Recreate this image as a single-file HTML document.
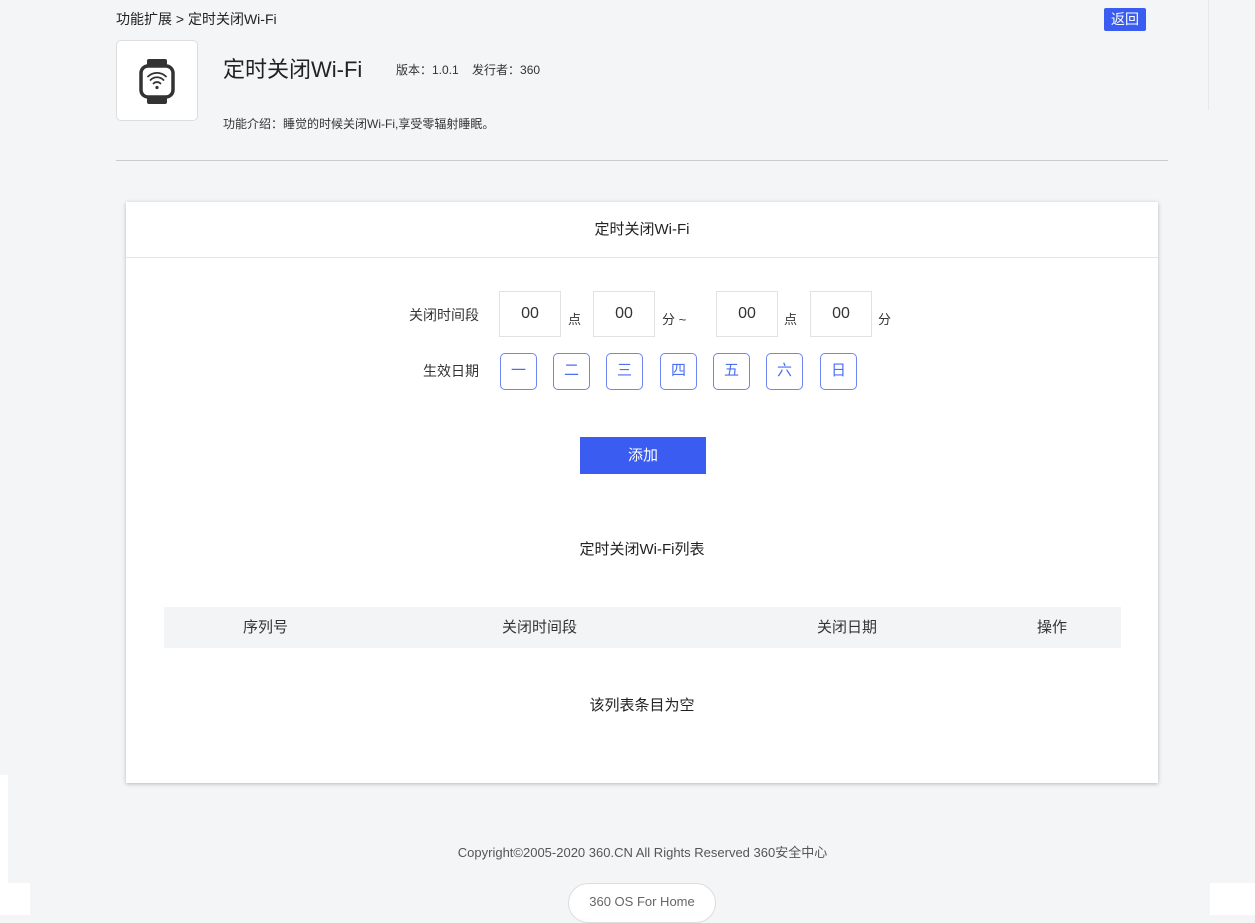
<!DOCTYPE html>
<html><head><meta charset="utf-8"><style>
*{margin:0;padding:0;box-sizing:border-box}
body{width:1255px;height:915px;background:#f4f5f7;font-family:"Liberation Sans","Noto Sans CJK SC",sans-serif;color:#333;position:relative;overflow:hidden}
.a{position:absolute}
.tb{width:62px;height:46px;border:1px solid #e2e2e2;background:#fff;font-size:16px;text-align:center;line-height:44px;color:#333}
.d{width:37px;height:37px;border:1.5px solid #6f86f0;border-radius:5px;color:#4b6ef5;font-size:15px;text-align:center;line-height:34px}
</style></head><body>
<div class="a" style="left:0;top:775px;width:8px;height:140px;background:#fff"></div>
<div class="a" style="left:0;top:883px;width:30px;height:32px;background:#fff"></div>
<div class="a" style="left:1210px;top:883px;width:45px;height:32px;background:#fff"></div>
<div class="a" style="left:1208px;top:0;width:1px;height:110px;background:#e8e8e8"></div>
<div class="a" style="left:116px;top:9px;font-size:14px;color:#222">功能扩展 &gt; 定时关闭Wi-Fi</div>
<div class="a" style="left:1104px;top:8px;width:42px;height:23px;background:#3a5cf0;color:#fff;font-size:14px;text-align:center;line-height:23px;border-radius:2px">返回</div>
<div class="a" style="left:116px;top:40px;width:82px;height:81px;background:#fff;border:1px solid #ddd;border-radius:5px">
<svg width="82" height="81" viewBox="0 0 82 81"><rect x="30" y="18" width="20" height="9" rx="2" fill="#333"/><rect x="30" y="54" width="20" height="9" rx="2" fill="#333"/><rect x="24" y="25" width="32" height="31" rx="7" fill="#fff" stroke="#333" stroke-width="3.5"/><path d="M31 35.5a13 13 0 0 1 18 0M33.5 39a9 9 0 0 1 13 0M36.5 42.5a5 5 0 0 1 7 0" fill="none" stroke="#333" stroke-width="1.8" stroke-linecap="round"/><circle cx="40" cy="46.5" r="1.6" fill="#333"/></svg></div>
<div class="a" style="left:223px;top:52px;font-size:22px;color:#222">定时关闭Wi-Fi</div>
<div class="a" style="left:396px;top:61px;font-size:12px;color:#333">版本：1.0.1&nbsp;&nbsp;&nbsp;&nbsp;发行者：360</div>
<div class="a" style="left:223px;top:115px;font-size:12px;color:#333">功能介绍：睡觉的时候关闭Wi-Fi,享受零辐射睡眠。</div>
<div class="a" style="left:116px;top:160px;width:1052px;height:1px;background:#ccc"></div>
<div class="a" style="left:126px;top:202px;width:1032px;height:581px;background:#fff;box-shadow:0 1px 4px rgba(0,0,0,.25)">
<div class="a" style="left:0;top:0;width:1032px;height:56px;border-bottom:1px solid #e5e5e5;text-align:center;line-height:56px;font-size:15px;color:#222">定时关闭Wi-Fi</div>
<div class="a" style="left:276px;top:103px;font-size:14px;width:77px;text-align:right">关闭时间段</div>
<div class="a tb" style="left:373px;top:89px">00</div><div class="a" style="left:442px;top:107px;font-size:13px">点</div>
<div class="a tb" style="left:467px;top:89px">00</div><div class="a" style="left:536px;top:107px;font-size:13px">分&nbsp;~</div>
<div class="a tb" style="left:590px;top:89px">00</div><div class="a" style="left:658px;top:107px;font-size:13px">点</div>
<div class="a tb" style="left:684px;top:89px">00</div><div class="a" style="left:752px;top:107px;font-size:13px">分</div>
<div class="a" style="left:276px;top:159px;font-size:14px;width:77px;text-align:right">生效日期</div>
<div class="a d" style="left:374px;top:151px">一</div><div class="a d" style="left:427px;top:151px">二</div><div class="a d" style="left:480px;top:151px">三</div><div class="a d" style="left:534px;top:151px">四</div><div class="a d" style="left:587px;top:151px">五</div><div class="a d" style="left:640px;top:151px">六</div><div class="a d" style="left:694px;top:151px">日</div>
<div class="a" style="left:454px;top:235px;width:126px;height:37px;background:#3a5cf0;color:#fff;font-size:15px;text-align:center;line-height:37px">添加</div>
<div class="a" style="left:0;top:336px;width:1032px;text-align:center;font-size:15px;color:#222">定时关闭Wi-Fi列表</div>
<div class="a" style="left:38px;top:405px;width:957px;height:41px;background:#f3f4f6;font-size:15px;line-height:41px">
<span class="a" style="left:79px">序列号</span><span class="a" style="left:338px">关闭时间段</span><span class="a" style="left:653px">关闭日期</span><span class="a" style="left:873px">操作</span></div>
<div class="a" style="left:0;top:492px;width:1032px;text-align:center;font-size:15px;color:#222">该列表条目为空</div>
</div>
<div class="a" style="left:0;top:842px;width:1285px;text-align:center;font-size:13px;color:#555">Copyright©2005-2020 360.CN All Rights Reserved 360安全中心</div>
<div class="a" style="left:568px;top:883px;width:148px;height:40px;border:1px solid #ddd;border-radius:20px;background:#fff;text-align:center;line-height:36px;font-size:13px;color:#666">360 OS For Home</div>
</body></html>
